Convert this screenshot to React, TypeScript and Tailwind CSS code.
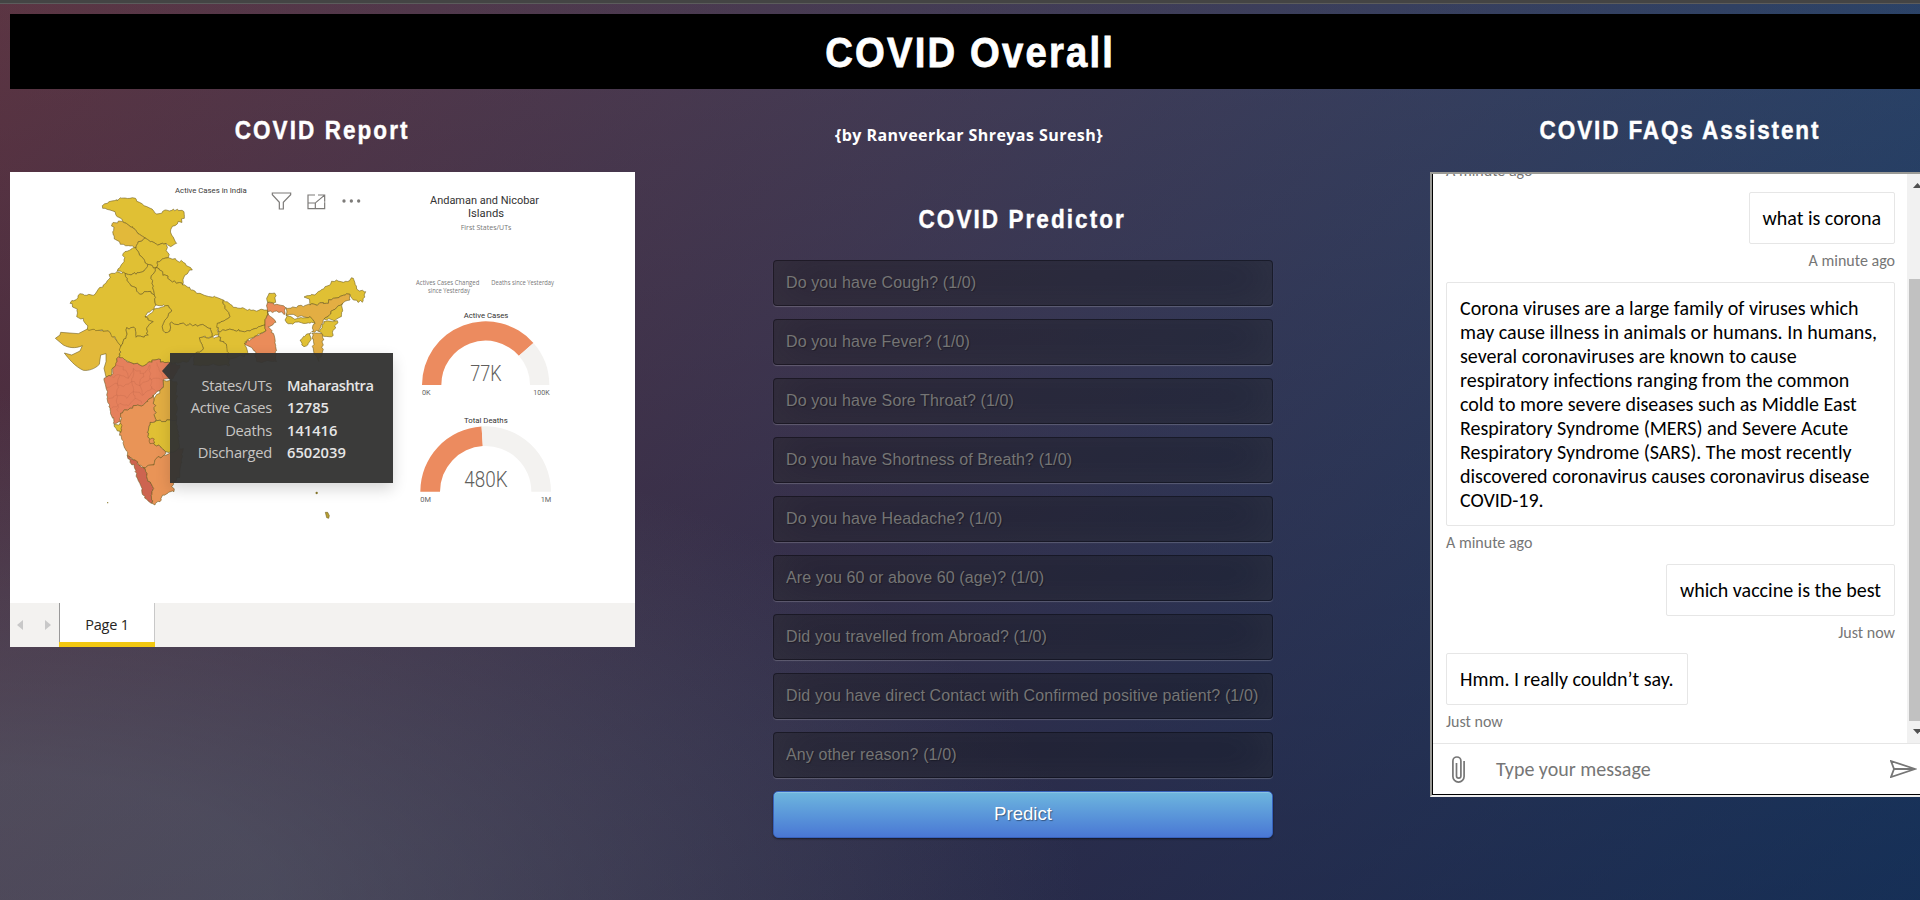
import React from "react";

type Point = [number, number];

const YELLOW = "#e0c034";
const AMBER = "#e2b93a";
const GOLD = "#e3ae43";
const ORANGE = "#e99457";
const SALMON = "#e5805c";
const RED = "#cd6450";

const states: { name: string; fill: string; d: string }[] = [
  { name: "Ladakh", fill: YELLOW, d: "307,122 335,108 375,99 397,98 430,120 470,147 488,139 520,132 552,140 553,160 525,182 512,195 515,210 530,235 512,245 498,235 470,238 437,220 410,200 385,180 370,172 352,155 345,140 330,135 308,130" },
  { name: "Jammu", fill: AMBER, d: "337,175 355,168 370,172 385,180 410,200 437,220 415,230 408,248 370,238 343,222" },
  { name: "Himachal", fill: YELLOW, d: "408,248 415,230 437,220 470,238 498,235 505,278 472,290 470,308 443,298 425,275" },
  { name: "Punjab", fill: YELLOW, d: "370,265 408,248 425,275 443,298 432,318 408,328 375,325 352,318 372,290" },
  { name: "Uttarakhand", fill: YELLOW, d: "472,290 505,278 550,292 577,315 555,330 548,360 510,345 470,308" },
  { name: "Haryana", fill: YELLOW, d: "375,325 408,328 432,318 443,298 470,308 453,340 458,368 463,390 443,380 420,388 400,365 380,345" },
  { name: "Rajasthan", fill: YELLOW, d: "350,320 375,325 380,345 400,365 420,388 443,380 463,390 468,420 455,435 435,455 460,470 440,490 445,510 408,517 405,490 380,488 378,520 362,545 325,497 262,492 250,460 230,455 232,432 210,415 240,386 285,388 310,360 335,325" },
  { name: "Uttar Pradesh", fill: YELLOW, d: "470,308 510,345 548,360 600,385 670,405 675,430 690,455 652,475 655,510 635,515 632,490 600,480 510,475 510,498 495,503 488,480 500,460 515,435 505,422 468,420 463,390 458,368 453,340" },
  { name: "Bihar", fill: YELLOW, d: "670,405 700,427 760,435 803,435 798,460 795,480 750,498 700,495 655,498 652,475 690,455 675,430" },
  { name: "Jharkhand", fill: YELLOW, d: "655,498 700,495 750,498 795,480 798,498 735,530 745,570 680,580 680,545 655,515" },
  { name: "Chhattisgarh", fill: YELLOW, d: "598,518 655,515 680,545 690,600 580,600 580,570 610,550" },
  { name: "Madhya Pradesh", fill: YELLOW, d: "362,545 378,520 380,488 405,490 408,517 445,510 440,490 460,470 435,455 470,430 505,422 515,435 500,460 488,480 495,503 510,498 510,475 600,480 632,490 635,515 598,518 610,550 580,570 560,592 505,592 465,585 430,603 390,592 358,578" },
  { name: "Maharashtra", fill: SALMON, d: "350,580 368,578 390,592 430,603 465,585 505,592 540,600 520,640 490,645 485,670 460,690 430,720 400,722 362,745 362,770 340,775 330,730 320,690 312,640 335,630 347,600" },
  { name: "Telangana", fill: GOLD, d: "490,645 530,650 530,765 465,770 462,700 485,670" },
  { name: "Andhra Pradesh", fill: YELLOW, d: "450,772 465,770 530,765 540,860 497,860 480,845 462,838 443,815" },
  { name: "Karnataka", fill: ORANGE, d: "460,690 462,700 465,770 450,772 443,815 462,838 480,845 497,860 490,872 470,880 462,900 430,908 382,872 360,800 362,745 400,722 430,720" },
  { name: "Goa", fill: YELLOW, d: "342,778 362,775 362,803 352,798" },
  { name: "Kerala", fill: RED, d: "382,872 405,885 430,908 440,935 458,965 456,1015 440,1003 425,975 410,925" },
  { name: "Tamil Nadu", fill: ORANGE, d: "430,908 462,900 470,880 490,872 550,850 540,930 515,965 522,980 488,990 480,1010 465,1020 456,1015 458,965 440,935" },
  { name: "Puducherry", fill: ORANGE, d: "448,824 463,822 464,834 450,836" },
  { name: "West Bengal", fill: "#ea8c5a", d: "798,460 803,435 803,412 830,418 857,428 855,447 830,438 803,440 812,455 828,472 805,485 820,505 830,590 770,590 765,558 732,535 798,498 795,480" },
  { name: "Sikkim", fill: YELLOW, d: "800,400 807,385 824,384 827,412 803,412" },
  { name: "Arunachal", fill: YELLOW, d: "912,396 945,390 975,365 1010,345 1030,352 1060,340 1070,372 1097,380 1087,412 1060,405 1050,388 1000,400 980,415 930,420 928,402" },
  { name: "Assam", fill: GOLD, d: "857,428 930,420 980,415 1000,400 1050,388 1050,405 1028,415 1000,435 972,462 958,500 935,500 945,475 930,455 858,450" },
  { name: "Meghalaya", fill: YELLOW, d: "858,450 880,460 930,455 945,475 860,473" },
  { name: "Nagaland", fill: YELLOW, d: "972,462 1000,435 1028,415 1024,455 1005,467" },
  { name: "Manipur", fill: YELLOW, d: "958,500 972,470 1012,467 995,515 965,508" },
  { name: "Mizoram", fill: GOLD, d: "935,505 968,508 970,540 957,590 942,565" },
  { name: "Tripura", fill: YELLOW, d: "900,525 920,507 933,503 930,528 912,545" },
];

const districts = [
  "335,635 360,630 385,640 400,610 430,625 450,600",
  "318,670 345,655 370,665 395,650 420,662 450,640 490,645",
  "325,700 350,690 380,700 400,680 430,690 455,665",
  "335,730 360,715 385,722 405,700 425,715",
  "360,630 352,660 350,690 355,740",
  "400,610 395,650 400,680 405,700",
  "430,625 420,662 430,690",
  "450,600 450,640 455,665 470,680",
  "470,592 480,620 490,645",
  "345,600 370,605 385,640",
];

// Deterministic offset, so that neighbouring states keep a common border.
function wobble(x: number, y: number): Point {
  const a = Math.sin(x * 12.9898 + y * 78.233) * 43758.5453;
  const b = Math.sin(x * 39.346 + y * 11.135) * 24634.6345;
  return [x + (a - Math.floor(a) - 0.5) * 8, y + (b - Math.floor(b) - 0.5) * 8];
}

function borderPath(d: string, closed = true): string {
  const pts = d.split(" ").map((p) => p.split(",").map(Number) as Point);
  const out: Point[] = [];
  const last = closed ? pts.length : pts.length - 1;
  for (let i = 0; i < last; i++) {
    const [x1, y1] = pts[i];
    const [x2, y2] = pts[(i + 1) % pts.length];
    const n = Math.max(1, Math.round(Math.hypot(x2 - x1, y2 - y1) / 7));
    for (let k = 0; k < n; k++) {
      const x = Math.round(x1 + ((x2 - x1) * k) / n);
      const y = Math.round(y1 + ((y2 - y1) * k) / n);
      out.push(k === 0 ? [x, y] : wobble(x, y));
    }
  }
  if (!closed) out.push(pts[pts.length - 1]);
  return "M" + out.map((p) => p[0].toFixed(1) + " " + p[1].toFixed(1)).join("L") + (closed ? "Z" : "");
}

function arc(cx: number, cy: number, R: number, r: number, from: number, to: number): string {
  const at = (rad: number, t: number) => {
    const a = Math.PI * (1 - t);
    return `${cx + rad * Math.cos(a)} ${cy - rad * Math.sin(a)}`;
  };
  return `M${at(R, from)}A${R} ${R} 0 0 1 ${at(R, to)}L${at(r, to)}A${r} ${r} 0 0 0 ${at(r, from)}Z`;
}

function Label({ x, y, size, width, fill, children, weight = 400 }: { x: number; y: number; size: number; width: number; fill: string; children: string; weight?: number }) {
  return (
    <text x={x} y={y} fontSize={size} textLength={width} lengthAdjust="spacingAndGlyphs" fill={fill} fontWeight={weight}>
      {children}
    </text>
  );
}

function ReportChart() {
  return (
    <svg className="block h-[431px] w-[625px] font-['Roboto',sans-serif]" viewBox="30 21 1875 1293">
      <g stroke="#6b5a1c" strokeOpacity="0.65" strokeWidth="2.6" strokeLinejoin="round">
        <path
          fill={AMBER}
          d="M262 492L285 490L300 497L325 497L345 520L365 545L357 578L350 582L352 600L335 612L335 630L318 636L312 610L318 590L318 566L302 570L298 598C285 612 265 618 250 616C225 605 205 580 193 564L215 570L240 558L247 542C225 552 205 548 190 540L166 520L180 510L182 502L235 506Z"
        />
        {states.map((s) => (
          <path key={s.name} fill={s.fill} d={borderPath(s.d)} />
        ))}
        <path fill="#b8a032" d="M976 1042L983 1042L988 1052L986 1060L980 1058Z" />
      </g>
      <g fill="none" stroke="#a9583f" strokeOpacity="0.3" strokeWidth="2">
        {districts.map((d) => (
          <path key={d} d={borderPath(d, false)} />
        ))}
      </g>
      <g fill="#8a7a2c">
        <circle cx="950" cy="984" r="3.5" />
        <circle cx="323" cy="1013" r="2" />
      </g>
      <g fill="none" stroke="#7d7b79" strokeWidth="3.6">
        <path d="M817 84H872V89L850 112V132H838V112L817 89Z" />
        <path d="M945 90H924V131H974V112M924 114H946V131M954 90H974V110M973 91L947 113" />
      </g>
      <g fill="#7d7b79">
        <circle cx="1032" cy="108" r="5" />
        <circle cx="1054" cy="108" r="5" />
        <circle cx="1076" cy="108" r="5" />
      </g>
      <Label x={525} y={84} size={23} width={215} fill="#3a3938">Active Cases in India</Label>
      <Label x={1290} y={117} size={35} width={327} fill="#333333">Andaman and Nicobar</Label>
      <Label x={1404} y={156} size={35} width={108} fill="#333333">Islands</Label>
      <g className="font-['Open_Sans',sans-serif]">
        <Label x={1382} y={195} size={22} width={152} fill="#777777">First States/UTs</Label>
        <Label x={1248} y={360} size={19} width={190} fill="#777777">Actives Cases Changed</Label>
        <Label x={1284} y={384} size={19} width={126} fill="#777777">since Yesterday</Label>
        <Label x={1474} y={360} size={19} width={188} fill="#777777">Deaths since Yesterday</Label>
      </g>
      <Label x={1391} y={459} size={24} width={134} fill="#333231">Active Cases</Label>
      <path fill="#ec8b5f" d={arc(1457, 660, 191, 133, 0, 0.77)} />
      <path fill="#f3f2f0" d={arc(1457, 660, 191, 133, 0.77, 1)} />
      <Label x={1411} y={648} size={64} width={94} weight={300} fill="#605e5c">77K</Label>
      <Label x={1266} y={690} size={23} width={26} fill="#666666">0K</Label>
      <Label x={1600} y={690} size={23} width={49} fill="#666666">100K</Label>
      <Label x={1392} y={774} size={24} width={131} fill="#333231">Total Deaths</Label>
      <path fill="#ec8b5f" d={arc(1457, 980, 196, 137, 0, 0.48)} />
      <path fill="#f3f2f0" d={arc(1457, 980, 196, 137, 0.48, 1)} />
      <Label x={1393} y={966} size={64} width={130} weight={300} fill="#605e5c">480K</Label>
      <Label x={1261} y={1011} size={23} width={32} fill="#666666">0M</Label>
      <Label x={1622} y={1011} size={23} width={32} fill="#666666">1M</Label>
    </svg>
  );
}

const tooltipRows = [
  { label: "States/UTs", value: "Maharashtra", fit: "tracking-[-0.5px]" },
  { label: "Active Cases", value: "12785", fit: "" },
  { label: "Deaths", value: "141416", fit: "" },
  { label: "Discharged", value: "6502039", fit: "" },
];

function Report() {
  return (
    <div className="relative h-[475px] w-[625px] bg-white">
      <ReportChart />
      <div className="absolute left-[160px] top-[181px] h-[130px] w-[223px] bg-[#333332]/96 pt-[20.5px] font-['Open_Sans',sans-serif] text-[14.7px] leading-[22.6px] shadow-[0_6px_14px_rgba(0,0,0,0.16)]">
        <svg className="absolute -left-[8px] top-[9px] h-[18px] w-[8px]" viewBox="0 0 8 18">
          <path d="M8 0L0 9L8 18Z" fill="#3b3a38" />
        </svg>
        {tooltipRows.map((row) => (
          <div key={row.label} className="flex">
            <span className="w-[102px] text-right tracking-[-0.25px] text-[#c8c6c4]">{row.label}</span>
            <span className={`ml-[15px] font-semibold text-[#e6e6e6] ${row.fit}`}>{row.value}</span>
          </div>
        ))}
      </div>
      <div className="flex h-[44px] bg-[#f3f2f0]">
        <div className="flex w-[49px] items-center justify-between pl-[7px] pr-[8px]">
          <svg className="h-[10px] w-[6px]" viewBox="0 0 6 10"><path d="M6 0V10L0 5Z" fill="#c8c8c8" /></svg>
          <svg className="h-[10px] w-[6px]" viewBox="0 0 6 10"><path d="M0 0V10L6 5Z" fill="#c8c8c8" /></svg>
        </div>
        <div className="h-full w-[96px] border-b-[5px] border-b-[#f2c811] bg-white">
          <div className="h-full border-l border-r border-l-[#999] border-r-[#c8c8c8] text-center font-['Open_Sans',sans-serif] text-[14.5px] leading-[43px] tracking-[-0.2px] text-[#252423]">Page 1</div>
        </div>
      </div>
    </div>
  );
}

const questions = [
  "Do you have Cough? (1/0)",
  "Do you have Fever? (1/0)",
  "Do you have Sore Throat? (1/0)",
  "Do you have Shortness of Breath? (1/0)",
  "Do you have Headache? (1/0)",
  "Are you 60 or above 60 (age)? (1/0)",
  "Did you travelled from Abroad? (1/0)",
  "Did you have direct Contact with Confirmed positive patient? (1/0)",
  "Any other reason? (1/0)",
];

function Predictor() {
  return (
    <form className="ml-[138px] mt-[55px] flex w-[500px] flex-col">
      <h2 className="flex h-[36px] items-center justify-center whitespace-nowrap font-['Liberation_Sans',sans-serif] text-[25px] font-bold tracking-[2.3px] text-white [-webkit-text-stroke:0.4px_white]">
        <span className="-translate-x-px scale-x-[0.9]">COVID Predictor</span>
      </h2>
      <div className="mt-[22px] flex flex-col gap-[13px] font-['Liberation_Sans',sans-serif]">
        {questions.map((q) => (
          <input
            key={q}
            placeholder={q}
            className="h-[46px] w-full rounded-[4px] border border-black/30 bg-black/30 px-[12px] text-[16px] tracking-[0.11px] text-white shadow-[inset_0_-5px_45px_rgba(100,100,100,0.2),0_1px_1px_rgba(255,255,255,0.2)] outline-none [text-shadow:1px_1px_1px_rgba(0,0,0,0.3)] placeholder:text-[#757575]"
          />
        ))}
        <button
          type="button"
          className="h-[47px] w-full rounded-[5px] border border-[#3762bc] bg-linear-to-b from-[#6eb6de] to-[#4a77d4] pb-[2px] text-[18.6px] text-white shadow-[inset_0_1px_0_rgba(255,255,255,0.2),0_1px_2px_rgba(0,0,0,0.5)] [text-shadow:1px_1px_1px_rgba(0,0,0,0.4)]"
        >
          Predict
        </button>
      </div>
    </form>
  );
}

function Bubble({ own, time, children }: { own?: boolean; time: string; children: React.ReactNode }) {
  return (
    <div className={own ? "flex flex-col items-end" : "flex flex-col items-start"}>
      <div className="rounded-[2px] border border-[#e6e6e6] px-[13px] py-[13px] text-[20px] leading-[24px] text-black">{children}</div>
      <div className="h-[37.7px] whitespace-nowrap pt-[7px] text-[16px] leading-[20px] text-[#767676]">{time}</div>
    </div>
  );
}

const answer = [
  "Corona viruses are a large family of viruses which",
  "may cause illness in animals or humans. In humans,",
  "several coronaviruses are known to cause",
  "respiratory infections ranging from the common",
  "cold to more severe diseases such as Middle East",
  "Respiratory Syndrome (MERS) and Severe Acute",
  "Respiratory Syndrome (SARS). The most recently",
  "discovered coronavirus causes coronavirus disease",
  "COVID-19.",
];

function Chat() {
  return (
    <div className="h-[625px] w-[500px] border-2 border-[#9a9a96] border-b-[#eeeeee] bg-white font-['Carlito','Lato',sans-serif]">
      <div className="flex h-full flex-col border-b border-l border-black">
        <div className="flex h-[569px] overflow-hidden">
          <div className="flex w-[474px] flex-col justify-end overflow-hidden pl-[13px] pr-[12px]">
            <div className="shrink-0 pb-[11px] text-[16px] leading-[20px] text-[#767676]">A minute ago</div>
            <Bubble own time="A minute ago">what is corona</Bubble>
            <Bubble time="A minute ago">
              <div className="w-[421px] whitespace-nowrap">
                {answer.map((line) => (
                  <div key={line}>{line}</div>
                ))}
              </div>
            </Bubble>
            <Bubble own time="Just now">which vaccine is the best</Bubble>
            <Bubble time="Just now">Hmm. I really couldn’t say.</Bubble>
          </div>
          <div className="flex w-[21px] flex-col items-center bg-[#f1f1f1]">
            <svg className="mt-[9px] h-[5px] w-[9px] shrink-0" viewBox="0 0 9 5"><path d="M0 5L4.5 0L9 5Z" fill="#505050" /></svg>
            <div className="mt-[91px] h-[442px] w-[17px] shrink-0 bg-[#c1c1c1]" />
            <svg className="mt-[8px] h-[5px] w-[9px] shrink-0" viewBox="0 0 9 5"><path d="M0 0L4.5 5L9 0Z" fill="#505050" /></svg>
          </div>
        </div>
        <div className="flex flex-1 items-center border-t border-[#e6e6e6]">
          <svg className="ml-[19px] h-[27px] w-[13px]" viewBox="0 0 13 27" fill="none" stroke="#767676" strokeWidth="1.7">
            <path d="M12.1 5V20.5A5.6 5.6 0 0 1 0.9 20.5V5A4 4 0 0 1 8.9 5V20A2.2 2.2 0 0 1 4.5 20V7" />
          </svg>
          <div className="ml-[31px] w-[394px] text-[20px] text-[#767676]">Type your message</div>
          <svg className="h-[18px] w-[27px] shrink-0" viewBox="0 0 27 18" fill="none" stroke="#767676" strokeWidth="1.8">
            <path d="M1 1L25 9L1 17L4 9ZM4 9H25" />
          </svg>
        </div>
      </div>
    </div>
  );
}

export default function App() {
  return (
    <div className="h-[900px] w-full overflow-hidden bg-[radial-gradient(ellipse_at_0%_100%,rgba(104,128,138,0.4)_10%,rgba(138,114,76,0)_40%),linear-gradient(to_bottom,rgba(57,173,219,0.25)_0%,rgba(42,60,87,0.4)_100%),linear-gradient(135deg,#670d10_0%,#092756_100%)]">
      <div className="h-[4px] border-b border-[#5c5c5c] bg-[#444444]" />
      <div className="ml-[10px] mt-[10px] w-[1920px]">
        <header className="flex h-[75px] items-center justify-center bg-black pr-[2px]">
          <h1 className="whitespace-nowrap font-['Liberation_Sans',sans-serif] text-[42px] font-bold tracking-[2.4px] text-white [-webkit-text-stroke:0.8px_white]">
            <span className="inline-block translate-x-px translate-y-px scale-x-[0.91]">COVID Overall</span>
          </h1>
        </header>
        <main className="flex">
          <section className="w-[625px]">
            <h2 className="flex h-[83px] items-center justify-center whitespace-nowrap font-['Liberation_Sans',sans-serif] text-[25px] font-bold tracking-[2.3px] text-white [-webkit-text-stroke:0.4px_white]">
              <span className="scale-x-[0.9]">COVID Report</span>
            </h2>
            <Report />
          </section>
          <section className="w-[795px]">
            <h4 className="ml-[200px] mt-[34px] h-[24px] whitespace-nowrap font-['Open_Sans',sans-serif] text-[16px] font-bold leading-[24px] tracking-[0.45px] text-white">{"{by Ranveerkar Shreyas Suresh}"}</h4>
            <Predictor />
          </section>
          <section className="w-[500px]">
            <h2 className="flex h-[83px] items-center justify-center whitespace-nowrap font-['Liberation_Sans',sans-serif] text-[25px] font-bold tracking-[2.1px] text-white [-webkit-text-stroke:0.4px_white]">
              <span className="scale-x-[0.9]">COVID FAQs Assistent</span>
            </h2>
            <Chat />
          </section>
        </main>
      </div>
    </div>
  );
}
